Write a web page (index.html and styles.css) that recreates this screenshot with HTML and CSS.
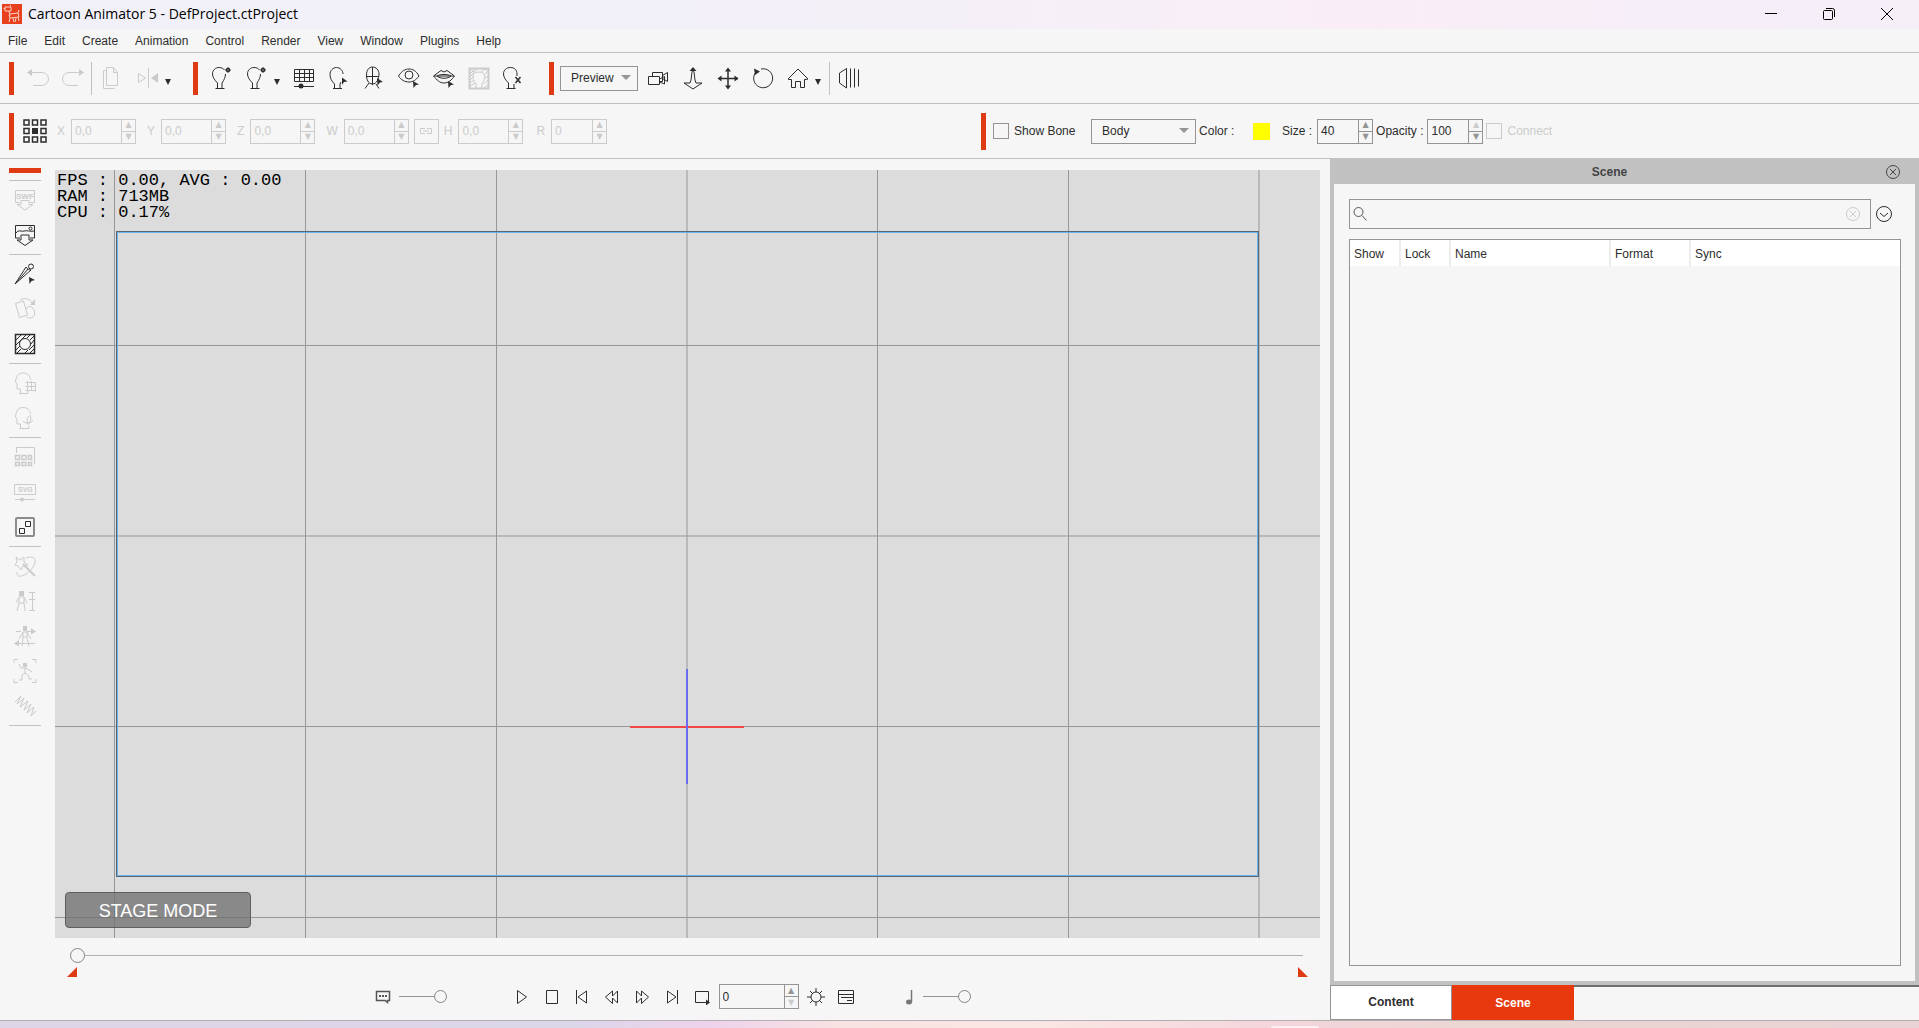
FILE: index.html
```html
<!DOCTYPE html>
<html lang="en">
<head>
<meta charset="utf-8">
<title>Cartoon Animator 5 - DefProject.ctProject</title>
<link rel="stylesheet" href="styles.css">
</head>
<body>
<svg class="sprite" aria-hidden="true">
  <symbol id="head-plus" viewBox="0 0 24 24"><path d="M7.500 22v-5C4.500 14 2.500 11 2.500 8c0-4 3-6.500 6.500-6.500 2.500 0 4.500 1 5.500 2.500M15.500 8c0 3-1.500 6-3.500 9v5M5.500 22.500h9"/><path d="M18 1v6M15 4h6M16.500 2.500h3v3h-3z"/></symbol>
  <symbol id="head-cursor" viewBox="0 0 24 24"><path d="M7.500 22v-4C4.500 15 3 12 3 8.500c0-4 3-7 6.500-7s6.500 3 6.500 6.500M14 16l-1 2v4M6 22.500h9"/><path class="solid" d="M15 11.500l5.500 4-3.500.5-2 3z"/></symbol>
  <symbol id="grid-slider" viewBox="0 0 24 24"><path d="M2.500 3.500h19v12h-19zM2.500 7.500h19M2.500 11.500h19M7.500 3.500v12M12.500 3.500v12M17.500 3.500v12M2 20.500h20"/><circle class="solid" cx="9" cy="20" r="2.500"/></symbol>
  <symbol id="head-mesh" viewBox="0 0 24 24"><path d="M4.500 9c0-5 2.500-8 6-8s6.500 3 6.500 7-2 10-6.500 10-6-5-6-9zM10.500 1v18M4 10.500h13M7 17l-4 5.500M14 18l3 4.500"/><path class="solid" d="M15 12l6 4-3 .5-2.500 3z"/></symbol>
  <symbol id="eye" viewBox="0 0 24 24"><path d="M1.500 10C5 4.500 8.500 3 12 3s7 1.500 10 7c-3 4-6 6-10 6S4 14 1.500 10z"/><circle cx="12" cy="9" r="4"/><path class="solid" d="M16 15l6 3.500-3 .5-2.500 3z"/></symbol>
  <symbol id="mouth" viewBox="0 0 24 24"><path d="M1.500 10L9 4.500l3 1.500 3-1.500L22.500 10c-3 4-6 7-10.500 7S5 14 1.500 10zM2 10h20M5 10c3-2 11-2 14 0-3 3-11 3-14 0z"/><path class="solid" d="M16 15l6 3.500-3 .5-2.500 3z"/></symbol>
  <symbol id="hatch-head" viewBox="0 0 24 24"><path d="M2.500 2.500h19v20h-19z" stroke-width="2"/><path d="M9 22v-4c-5-6-4-12 3-12s7 6 3 12v4M3 8l5-5M3 11l7-8M3 14l4-4M3 17l4-3M3 20l5-3M14 6l4-3M17 9l5-5M17 13l5-4M17 18l5-5M17 22l5-4M18 3l4 4M3 3l4 3"/></symbol>
  <symbol id="head-x" viewBox="0 0 24 24"><path d="M6.500 22v-5C3.500 14 1.500 11 1.500 8c0-4 3-6.500 7-6.500S15 4 15 8v2M12 18v4M4.500 22.500h9"/><path d="M13.500 11l5 6M18.500 11l-5 6" stroke-width="1.500"/></symbol>
  <symbol id="undo" viewBox="0 0 24 24"><path d="M3 6.500h13a5.500 5.500 0 0 1 0 13H7"/><path class="solid" d="M1 6.500L6 3v7z"/></symbol>
  <symbol id="redo" viewBox="0 0 24 24"><path d="M21 6.500H8a5.500 5.500 0 0 0 0 13h9"/><path class="solid" d="M23 6.500L18 3v7z"/></symbol>
  <symbol id="doc" viewBox="0 0 24 24"><path d="M4.500 4.500v18h11M4.500 4.500h3M7.500 1.500h7l4 5v13h-11zM14.500 1.500v5h4"/></symbol>
  <symbol id="flip" viewBox="0 0 24 24"><path d="M2.500 7.500v9l7-4.500zM12.500 2v20"/><path class="solid" d="M22 7v10l-7-5z"/></symbol>
  <symbol id="camera" viewBox="0 0 24 24"><path d="M2.500 10.500h11v8h-11zM6.500 10V6.500h10v9h-3M16.500 9.500l5-3v9l-5-3M13.500 13l5-2.500v7.500l-5-2"/></symbol>
  <symbol id="zoom-v" viewBox="0 0 24 24"><path d="M12 4l-1 2-1 8-1 3H3l9 6 9-6h-6l-1-3-1-8z"/><path class="solid" d="M12 1l3.500 4h-7z"/></symbol>
  <symbol id="move" viewBox="0 0 24 24"><path d="M12 3v19M3 12.500h19" stroke-width="1.500"/><path class="solid" d="M12 1.500l3 4H9zM12 23.500l3-4H9zM1.500 12.500l4-3v6zM22.500 12.500l-4-3v6z"/></symbol>
  <symbol id="rotate" viewBox="0 0 24 24"><path d="M5 6a9.500 9.500 0 1 0 5-3"/><path class="solid" d="M3 2.500l6 3-5 3.500z"/></symbol>
  <symbol id="home" viewBox="0 0 24 24"><path d="M2 13L12 3l10 10-2 .5h-1.500v8h-4v-6h-5v6h-4v-8H3z"/></symbol>
  <symbol id="depth" viewBox="0 0 24 24"><path d="M9.500 2.500L2.500 7v10l7 5zM13.500 2.500v19M17.500 2.500v19M21.500 3.500v17"/></symbol>
  <symbol id="caret" viewBox="0 0 6 6"><path class="solid" d="M0 0h6L3 6z"/></symbol>
  <symbol id="link" viewBox="0 0 16 12"><path d="M7 3.500H2.500v5H7M9 3.500h4.500v5H9M5 6h6"/></symbol>
  <symbol id="anchor9" viewBox="0 0 24 24"><path d="M1 1h5v5H1zM9.500 1h5v5h-5zM18 1h5v5h-5zM1 9.500h5v5H1zM18 9.500h5v5h-5zM1 18h5v5H1zM9.500 18h5v5h-5zM18 18h5v5h-5z" stroke-width="1.500"/><path class="solid" d="M9 9h6v6H9z"/></symbol>
  <symbol id="image-in" viewBox="0 0 24 24"><path d="M7 15H2.500V2.500h19V15H17M8 13v4H4l8 5.500 8-5.500h-4v-5H8zM3 10c3-4 5-1 8-2s6 1 10 0"/><circle cx="17.500" cy="5.500" r="1.500"/></symbol>
  <symbol id="bone" viewBox="0 0 24 24"><circle cx="18" cy="4.500" r="2.500"/><path d="M2 22L13 5c1 2 3 3 5 3zM3 21L15 7"/><path class="solid" d="M16 15l6 3-3.500 1-2 3z"/></symbol>
  <symbol id="turn-page" viewBox="0 0 24 24"><path d="M2.500 6.500l8-2.500 4 14-8 2.500zM7 3c5-3 10-1 12 3M13 12c2-4 8-3 8.500 3s-4 7-8 5"/><path class="solid" d="M22 2v6h-5z"/></symbol>
  <symbol id="mask" viewBox="0 0 24 24"><path d="M2.500 2.500h19v19h-19z" stroke-width="1.500"/><circle cx="12" cy="12" r="5.500"/><path d="M3 8l5-5M3 13L13 3M3 18l4-4M4 21l4-4M14 6l3-3M17 8l4-4M18 12l3-4M16 18l5-5M12 21l3-3M17 21l4-4"/></symbol>
  <symbol id="head-grid" viewBox="0 0 24 24"><path d="M7.500 22v-4H4v-5L2.500 11C3 5 5 2 10 2s7 3 7.500 7M6 22.500h9V20M12.500 11.500h10v9M12.500 15.500h10M12.500 19.500h10M14.500 10v10M18.500 10v10"/></symbol>
  <symbol id="head-spin" viewBox="0 0 24 24"><path d="M7.500 22v-4H4v-5L2.500 11C3 5 5 1.500 10 1.500s7 3 7.500 6.500M6 22.500h10V20M16 10c-3 3-2 8 0 9M20 14c-2 4-8 4-10 1M17 9c2 4 0 8-3 8"/></symbol>
  <symbol id="sprites" viewBox="0 0 24 24"><path d="M3.500 8V2.500h18V19"/><path d="M2.500 10.500h4v4h-4zM9 10.500h4v4H9zM15.500 10.500h3v4h-3zM2.500 17.500h4v3h-4zM9 17.500h4v3H9zM15.500 17.500h3v3h-3z" stroke-width="1.500"/></symbol>
  <symbol id="magic" viewBox="0 0 24 24"><path d="M3 3l4 3 4-3v5l4 3-5 1-2 4-3-4-3-1 2-3zM13 4c5-2 9-1 9 3s-3 9-9 13-10 2-9-2"/><path d="M10 10l12 12" stroke-width="2"/></symbol>
  <symbol id="man-height" viewBox="0 0 24 24"><path class="solid" d="M6 2h5v5H6z"/><path d="M3 14l3-6h5l3 6M6 9v5l-2 8M11 9v5l1 8M6 14h5M16 3.500h6M16 10.500h6M16 21.500h6M19.500 4v17"/></symbol>
  <symbol id="man-walk" viewBox="0 0 24 24"><path class="solid" d="M10 2h4v5h-4zM18 4l5 3.500-5 3zM6 16l-5 3.500 5 3z"/><path d="M3 7.500h5M14 7.500h5M6 15l4-7h4l4 7M10 8v6l-1 8M14 8v6l2 8M10 13h4M6 19.500h16"/></symbol>
  <symbol id="man-frame" viewBox="0 0 24 24"><path class="solid" d="M10 4h4v4h-4z"/><path d="M1 4V.500h4M19 .500h4V4M1 20v3.500h4M19 23.500h4V20M6 5l2 4h5l6 4M12 9v6M12 14l-3 2v5H6M12 14l4 3v3h3"/></symbol>
  <symbol id="spring" viewBox="0 0 24 24"><path d="M2 8l6-6-4 8 7-6-4 9 8-6-4 9 7-6-4 9 7-6-3 9 5-5"/></symbol>
  <symbol id="comment" viewBox="0 0 16 16"><path d="M1.500 2.500h13v9h-2v2l-2.500-2H1.500z" stroke-width="1.500"/><path class="solid" d="M4 6h2v2H4zM7 6h2v2H7zM10 6h2v2h-2z"/></symbol>
  <symbol id="note" viewBox="0 0 16 16"><path d="M10.500 1v12" stroke-width="1.500"/><ellipse class="solid" cx="8" cy="13" rx="3" ry="2.500"/></symbol>
  <symbol id="play" viewBox="0 0 16 16"><path d="M3.500 1.500v13l9-6.500z"/></symbol>
  <symbol id="stop" viewBox="0 0 16 16"><path d="M2.500 1.500h11v13h-11z"/></symbol>
  <symbol id="prev" viewBox="0 0 16 16"><path d="M2.500 1v14M12.500 2v12L4 8z"/></symbol>
  <symbol id="rewind" viewBox="0 0 16 16"><path d="M8.500 2L1.500 8l7 6.500V9l5 5V2l-5 5z"/></symbol>
  <symbol id="forward" viewBox="0 0 16 16"><path d="M7.500 2l7 6-7 6.500V9l-5 5V2l5 5z"/></symbol>
  <symbol id="next" viewBox="0 0 16 16"><path d="M13.500 1v14M3.500 2v12L12 8z"/></symbol>
  <symbol id="loop" viewBox="0 0 16 16"><path d="M11 13.500H1.500v-11h13v11H11"/><path class="solid" d="M12 10.500l4 3-4 3z"/></symbol>
  <symbol id="gear" viewBox="0 0 18 18"><circle cx="9" cy="9" r="5"/><path d="M9 0v4M9 14v4M0 9h4M14 9h4M3 3l3 3M15 3l-3 3M3 15l3-3M15 15l-3-3"/></symbol>
  <symbol id="list" viewBox="0 0 18 18"><path d="M1.500 2.500h15v13h-15zM2 6.500h14M4 9.500h12M10 12.500h5"/></symbol>
  <symbol id="close-round" viewBox="0 0 16 16"><circle cx="8" cy="8" r="6.500"/><path d="M5 5l6 6M11 5l-6 6"/></symbol>
  <symbol id="down-round" viewBox="0 0 18 18"><circle cx="9" cy="9" r="7.500"/><path d="M5 8l4 3.500L13 8"/></symbol>
  <symbol id="search" viewBox="0 0 16 16"><circle cx="5.500" cy="6" r="4.500"/><path d="M9 9.500l4.500 5"/></symbol>
</svg>

<header class="titlebar">
  <svg class="logo" viewBox="0 0 20 20" aria-hidden="true"><rect width="20" height="20"/><path d="M3 3h6v4H3zM1.500 4.500H3M8 2l1-1M7 7l1 5M8 10l8-1 1-3M16 9l1 4-9 1-1-3M8 14l-1 4M11 14l1 4M14 14l-1 4M16 13l1 4"/></svg>
  <h1>Cartoon Animator 5 - DefProject.ctProject</h1>
  <div class="window-buttons">
    <button aria-label="Minimize"><svg viewBox="0 0 14 14"><path d="M1 6.500h12"/></svg></button>
    <button aria-label="Restore"><svg viewBox="0 0 14 14"><rect x="1.500" y="3.500" width="9" height="9" rx="1"/><path d="M4 1.500h6.500a2 2 0 0 1 2 2V10"/></svg></button>
    <button aria-label="Close"><svg viewBox="0 0 14 14"><path d="M1 1l12 12M13 1L1 13"/></svg></button>
  </div>
</header>

<nav class="menubar">
  <button>File</button><button>Edit</button><button>Create</button><button>Animation</button><button>Control</button><button>Render</button><button>View</button><button>Window</button><button>Plugins</button><button>Help</button>
</nav>

<div class="toolbar main-tools" role="toolbar" aria-label="Main">
  <span class="grip"></span>
  <button class="tool" disabled aria-label="Undo"><svg><use href="#undo"/></svg></button>
  <button class="tool" disabled aria-label="Redo"><svg><use href="#redo"/></svg></button>
  <span class="divider"></span>
  <button class="tool" disabled aria-label="Copy"><svg><use href="#doc"/></svg></button>
  <button class="tool spaced" disabled aria-label="Flip"><svg><use href="#flip"/></svg></button>
  <button class="more" aria-label="Flip options"><svg><use href="#caret"/></svg></button>
  <span class="grip after-group"></span>
  <button class="tool" aria-label="Create head"><svg><use href="#head-plus"/></svg></button>
  <button class="tool" aria-label="Create actor"><svg><use href="#head-plus"/></svg></button>
  <button class="more" aria-label="Actor options"><svg><use href="#caret"/></svg></button>
  <button class="tool after-more" aria-label="Sprite editor"><svg><use href="#grid-slider"/></svg></button>
  <button class="tool" aria-label="Head"><svg><use href="#head-cursor"/></svg></button>
  <button class="tool" aria-label="Face fitting"><svg><use href="#head-mesh"/></svg></button>
  <button class="tool" aria-label="Eyes"><svg><use href="#eye"/></svg></button>
  <button class="tool" aria-label="Mouth"><svg><use href="#mouth"/></svg></button>
  <button class="tool" disabled aria-label="Background mask"><svg><use href="#hatch-head"/></svg></button>
  <button class="tool" aria-label="Remove head"><svg><use href="#head-x"/></svg></button>
  <span class="grip after-tools"></span>
  <div class="select preview"><select aria-label="Render quality"><option>Preview</option></select></div>
  <button class="tool spaced" aria-label="Camera"><svg><use href="#camera"/></svg></button>
  <button class="tool" aria-label="Zoom"><svg><use href="#zoom-v"/></svg></button>
  <button class="tool" aria-label="Pan"><svg><use href="#move"/></svg></button>
  <button class="tool" aria-label="Rotate"><svg><use href="#rotate"/></svg></button>
  <button class="tool" aria-label="Home"><svg><use href="#home"/></svg></button>
  <button class="more" aria-label="Home options"><svg><use href="#caret"/></svg></button>
  <span class="divider wide"></span>
  <button class="tool" aria-label="3D view"><svg><use href="#depth"/></svg></button>
</div>

<div class="toolbar props">
  <div class="props-left">
    <span class="grip tall"></span>
    <button class="anchor" aria-label="Pivot"><svg><use href="#anchor9"/></svg></button>
    <div class="field off first"><label for="fx">X</label><div class="spin"><input id="fx" type="text" value="0,0" disabled><div class="steps"><button disabled aria-label="Up">▲</button><button disabled aria-label="Down">▼</button></div></div></div>
    <div class="field off"><label for="fy">Y</label><div class="spin"><input id="fy" type="text" value="0,0" disabled><div class="steps"><button disabled aria-label="Up">▲</button><button disabled aria-label="Down">▼</button></div></div></div>
    <div class="field off"><label for="fz">Z</label><div class="spin"><input id="fz" type="text" value="0,0" disabled><div class="steps"><button disabled aria-label="Up">▲</button><button disabled aria-label="Down">▼</button></div></div></div>
    <div class="field off"><label for="fw">W</label><div class="spin"><input id="fw" type="text" value="0,0" disabled><div class="steps"><button disabled aria-label="Up">▲</button><button disabled aria-label="Down">▼</button></div></div></div>
    <button class="link" disabled aria-label="Lock ratio"><svg><use href="#link"/></svg></button>
    <div class="field off height"><label for="fh">H</label><div class="spin"><input id="fh" type="text" value="0,0" disabled><div class="steps"><button disabled aria-label="Up">▲</button><button disabled aria-label="Down">▼</button></div></div></div>
    <div class="field off angle"><label for="fr">R</label><div class="spin narrow"><input id="fr" type="text" value="0" disabled><div class="steps"><button disabled aria-label="Up">▲</button><button disabled aria-label="Down">▼</button></div></div></div>
  </div>
  <div class="props-right">
    <span class="grip tall"></span>
    <label class="check show-bone"><input type="checkbox">Show Bone</label>
    <div class="select body"><select aria-label="Bone part"><option>Body</option></select></div>
    <label class="color-label" for="bone-color">Color :</label>
    <button class="swatch" id="bone-color" aria-label="Bone color"></button>
    <div class="field"><label for="size">Size :</label><div class="spin narrow"><input id="size" type="text" value="40"><div class="steps"><button aria-label="Up">▲</button><button aria-label="Down">▼</button></div></div></div>
    <div class="field tight"><label for="opacity">Opacity :</label><div class="spin narrow"><input id="opacity" type="text" value="100"><div class="steps"><button disabled aria-label="Up">▲</button><button aria-label="Down">▼</button></div></div></div>
    <label class="check off"><input type="checkbox" disabled>Connect</label>
  </div>
</div>

<main class="workspace">
  <aside class="side-tools" role="toolbar" aria-label="Edit">
    <span class="side-grip"></span>
    <div class="group">
      <button disabled aria-label="Import SWF"><svg viewBox="0 0 24 24"><path d="M7 14.500H2.500v-12h19v12H17M8 12.500v4H4l8 5.500 8-5.500h-4v-4z"/><text class="icon-word" x="3" y="11">SWF</text></svg></button>
      <button aria-label="Import image"><svg><use href="#image-in"/></svg></button>
    </div>
    <div class="group">
      <button aria-label="Bone editor"><svg><use href="#bone"/></svg></button>
      <button disabled aria-label="Angle"><svg><use href="#turn-page"/></svg></button>
      <button aria-label="Mask"><svg><use href="#mask"/></svg></button>
    </div>
    <div class="group">
      <button disabled aria-label="Head setup"><svg><use href="#head-grid"/></svg></button>
      <button disabled aria-label="Head turn"><svg><use href="#head-spin"/></svg></button>
    </div>
    <div class="group">
      <button disabled aria-label="Sprites"><svg><use href="#sprites"/></svg></button>
      <button disabled aria-label="SVG"><svg viewBox="0 0 24 24"><path d="M1.500 4.500h21v10h-21zM2 19.500h20"/><circle class="solid" cx="9" cy="19.500" r="2"/><text class="icon-word small" x="5" y="12">SVG</text></svg></button>
      <button aria-label="Layers"><svg viewBox="0 0 24 24"><rect class="soft" x="3" y="3" width="18" height="18" rx="1"/><path d="M12.500 6.500h5v5h-5zM6.500 13.500h5v5h-5z"/></svg></button>
    </div>
    <div class="group last">
      <button disabled aria-label="Effects"><svg><use href="#magic"/></svg></button>
      <button disabled aria-label="Proportion"><svg><use href="#man-height"/></svg></button>
      <button disabled aria-label="Motion"><svg><use href="#man-walk"/></svg></button>
      <button disabled aria-label="Pose"><svg><use href="#man-frame"/></svg></button>
      <button disabled aria-label="Spring"><svg><use href="#spring"/></svg></button>
    </div>
  </aside>

  <section class="center">
    <div class="canvas">
      <svg class="scene" viewBox="0 0 1265 768" preserveAspectRatio="xMidYMid slice" aria-hidden="true">
        <path class="gridline" d="M59.500 0v768M250.500 0v768M441.500 0v768M632 0v768M822.500 0v768M1013.500 0v768M1204 0v768M0 175.500h1265M0 366h1265M0 556.500h1265M0 747.500h1265"/>
        <rect class="frame-outer" x="61.500" y="61.500" width="1142" height="645"/>
        <rect class="frame-inner" x="62.500" y="62.500" width="1140" height="643"/>
        <path class="axis-x" d="M575 557h114"/>
        <path class="axis-y" d="M632 499v115"/>
      </svg>
      <pre class="stats">FPS : 0.00, AVG : 0.00
RAM : 713MB
CPU : 0.17%</pre>
      <div class="mode">STAGE MODE</div>
    </div>
    <div class="timeline">
      <input class="seek" type="range" min="0" max="100" value="0" aria-label="Timeline">
      <div class="markers"><span class="mark start"></span><span class="mark end"></span></div>
      <div class="transport">
        <svg class="small-icon"><use href="#comment"/></svg>
        <input class="mini-range" type="range" value="100" aria-label="Voice volume">
        <div class="play-group">
          <button aria-label="Play"><svg><use href="#play"/></svg></button>
          <button aria-label="Stop"><svg><use href="#stop"/></svg></button>
          <button aria-label="First frame"><svg><use href="#prev"/></svg></button>
          <button aria-label="Previous frame"><svg><use href="#rewind"/></svg></button>
          <button aria-label="Next frame"><svg><use href="#forward"/></svg></button>
          <button aria-label="Last frame"><svg><use href="#next"/></svg></button>
          <button aria-label="Loop"><svg><use href="#loop"/></svg></button>
        </div>
        <div class="spin frame-no"><input type="text" value="0" aria-label="Current frame"><div class="steps"><button aria-label="Up">▲</button><button disabled aria-label="Down">▼</button></div></div>
        <div class="play-options">
          <button aria-label="Settings"><svg><use href="#gear"/></svg></button>
          <button aria-label="Timeline panel"><svg><use href="#list"/></svg></button>
        </div>
        <svg class="small-icon note"><use href="#note"/></svg>
        <input class="mini-range music" type="range" value="100" aria-label="Music volume">
      </div>
    </div>
  </section>

  <section class="dock">
    <div class="panel">
      <div class="panel-head"><h2>Scene</h2><button aria-label="Close panel"><svg><use href="#close-round"/></svg></button></div>
      <div class="panel-body">
        <div class="search-row">
          <div class="search"><svg class="small-icon"><use href="#search"/></svg><input type="text" aria-label="Search"><button disabled aria-label="Clear"><svg><use href="#close-round"/></svg></button></div>
          <button class="expand" aria-label="Search options"><svg><use href="#down-round"/></svg></button>
        </div>
        <div class="table-box">
          <table>
            <colgroup><col class="c-show"><col class="c-lock"><col class="c-name"><col class="c-format"><col></colgroup>
            <thead><tr><th>Show</th><th>Lock</th><th>Name</th><th>Format</th><th>Sync</th></tr></thead>
          </table>
        </div>
      </div>
    </div>
    <div class="tabs" role="tablist"><button role="tab" class="tab">Content</button><button role="tab" class="tab active" aria-selected="true">Scene</button></div>
  </section>
</main>

<footer class="desktop-edge"><span></span></footer>
</body>
</html>
```
FILE: styles.css
```css
* { box-sizing: border-box; }

body {
  margin: 0;
  min-height: 100vh;
  display: flex;
  flex-direction: column;
  background: #f6f6f6;
  color: #2d2d2d;
  font: 12px/16px "Liberation Sans", Arial, sans-serif;
}

button, input, select { font: inherit; color: inherit; margin: 0; }
button { background: none; border: 0; padding: 0; display: flex; align-items: center; justify-content: center; }
button:disabled { color: #cbcbcb; }
svg { display: block; flex: none; fill: none; stroke: currentColor; stroke-width: 1; }
.solid { fill: currentColor; stroke: none; }
.soft { stroke: #8c8c8c; stroke-width: 2; }
.icon-word { fill: currentColor; stroke: none; font: bold 8px "Liberation Sans", Arial, sans-serif; }
.icon-word.small { font-size: 7px; }
.sprite { position: absolute; width: 0; height: 0; }

/* Title bar */
.titlebar {
  display: flex;
  align-items: center;
  height: 29px;
  padding: 0 3px 1px 2px;
  background: linear-gradient(90deg, #f1f0f8, #f3f0f8 45%, #faeef6 72%, #f6eef8 85%, #f5eff8);
}
.logo { width: 20px; height: 20px; stroke: #fbd5c8; }
.logo rect { fill: #e8401c; stroke: none; }
.titlebar h1 { flex: 1; margin: 0 0 0 6px; font: 14px/20px "Open Sans", "Noto Sans", sans-serif; color: #000; }
.window-buttons { display: flex; color: #000; }
.window-buttons button { width: 58px; height: 28px; }
.window-buttons svg { width: 14px; height: 14px; }

/* Menu */
.menubar { display: flex; gap: 17px; height: 24px; padding-left: 8px; border-bottom: 1px solid #c1c1c1; }

/* Toolbars */
.toolbar { display: flex; align-items: center; border-bottom: 1px solid #c1c1c1; padding-left: 9px; }
.main-tools { height: 51px; }
.props { height: 55px; }
.grip { flex: none; width: 5px; height: 33px; margin-right: 6px; background: #de3a14; }
.grip.tall { height: 37px; }
.grip.after-group { margin-left: 22px; }
.grip.after-tools { margin-left: 18px; }
.tool { width: 35px; height: 33px; }
.tool svg, .anchor svg { width: 24px; height: 24px; }
.spaced { margin-left: 2px; }
.after-more { margin-left: 6px; }
.more { width: 6px; height: 33px; padding-top: 8px; }
.more svg { width: 6px; height: 6px; }
.divider { width: 1px; height: 33px; margin: 0 1px; background: #c1c1c1; }
.divider.wide { margin-left: 8px; }

.select { position: relative; height: 25px; border: 1px solid #949494; }
.select select { width: 100%; height: 23px; padding: 0 10px; border: 0; background: none; appearance: none; }
.select::after {
  content: "";
  position: absolute;
  right: 6px;
  top: 8px;
  border: 5px solid transparent;
  border-top-color: #949494;
  border-bottom: 0;
  pointer-events: none;
}
.preview { width: 78px; }
.body { width: 105px; }

.props-left, .props-right { display: flex; align-items: center; }
.props-left { flex: 0 0 calc(51% - 2px); }
.anchor { margin-left: 3px; }
.field { display: flex; align-items: center; gap: 5px; margin-left: 12px; white-space: nowrap; }
.field.off { gap: 6px; margin-left: 11px; }
.field.first { margin-left: 10px; }
.field.height { margin-left: 5px; }
.field.angle { margin-left: 13px; }
.field.tight { margin-left: 3px; gap: 4px; }
.off, .off label { color: #cbcbcb; }
.spin { display: flex; width: 65px; height: 25px; border: 1px solid #949494; }
.spin.narrow { width: 56px; }
.spin input { flex: 1; min-width: 0; width: 0; padding: 0 3px; border: 0; background: none; }
.off .spin, .off .steps, .off .steps button + button { border-color: #cbcbcb; }
.steps { display: flex; flex-direction: column; width: 14px; border-left: 1px solid #949494; color: #949494; }
.steps button { flex: 1; font: 8px/8px "DejaVu Sans", sans-serif; }
.steps button + button { border-top: 1px solid #949494; }
.link { width: 25px; height: 25px; margin-left: 5px; border: 1px solid #cbcbcb; }
.link svg { width: 16px; height: 12px; }

.check { display: flex; align-items: center; gap: 5px; margin-left: 3px; white-space: nowrap; }
.check input { width: 16px; height: 16px; appearance: none; border: 1px solid #949494; }
.check.off input { border-color: #cbcbcb; }
.show-bone { width: 98px; margin-left: 1px; }
.color-label { width: 54px; margin-left: 3px; }
.swatch { width: 17px; height: 17px; background: #ff0; }

/* Workspace */
.workspace { flex: 1; display: grid; grid-template-columns: 55px 1fr 589px; }

.side-tools { display: flex; flex-direction: column; width: 41px; padding: 9px 0 0 9px; }
.side-grip { height: 5px; margin-bottom: 7px; background: #de3a14; }
.group { display: flex; flex-direction: column; align-items: center; gap: 11px; padding: 7px 0; border-top: 1px solid #c1c1c1; }
.group.last { border-bottom: 1px solid #c1c1c1; }
.group svg { width: 24px; height: 24px; }

.center { display: flex; flex-direction: column; padding: 11px 10px 0 0; min-width: 0; }
.canvas { position: relative; flex: 1; min-height: 300px; background: #dcdcdc; overflow: hidden; }
.scene { position: absolute; inset: 0; width: 100%; height: 100%; }
.gridline { stroke: #979797; }
.frame-outer { stroke: #5c6670; }
.frame-inner { stroke: #69b4ea; }
.axis-x { stroke: #f04848; stroke-width: 2; }
.axis-y { stroke: #6c6cf0; stroke-width: 2; }
.stats { position: absolute; left: 2px; top: 3px; margin: 0; color: #000; font: 17px/16px "Liberation Mono", "Courier New", monospace; }
.mode {
  position: absolute;
  left: 10px;
  bottom: 10px;
  width: 186px;
  height: 36px;
  border: 1px solid #5f5f5f;
  border-radius: 4px;
  background: rgba(110, 110, 110, .75);
  color: #fff;
  font-size: 18px;
  line-height: 36px;
  text-align: center;
}

.timeline { height: 82px; }
input[type="range"] { appearance: none; display: block; background: none; }
.seek { width: calc(100% - 32px); height: 15px; margin: 10px 0 0 15px; }
.seek::-webkit-slider-runnable-track { height: 15px; background: linear-gradient(#b0b0b0, #b0b0b0) 0 7px / 100% 1px no-repeat; }
.seek::-webkit-slider-thumb { appearance: none; width: 15px; height: 15px; border: 1px solid #858585; border-radius: 50%; background: #f6f6f6; }
.markers { display: flex; justify-content: space-between; padding: 4px 12px 0; }
.mark { width: 10px; height: 10px; background: #de3a14; }
.mark.start { clip-path: polygon(100% 0, 100% 100%, 0 100%); }
.mark.end { clip-path: polygon(0 0, 100% 100%, 0 100%); }
.transport { display: flex; align-items: center; justify-content: center; padding: 7px 30px 0 0; }
.small-icon { width: 16px; height: 16px; color: #555; }
.mini-range { width: 48px; height: 13px; margin-left: 8px; }
.mini-range::-webkit-slider-runnable-track { height: 13px; background: linear-gradient(#949494, #949494) 0 6px / 100% 1px no-repeat; }
.mini-range::-webkit-slider-thumb { appearance: none; width: 13px; height: 13px; border: 1px solid #858585; border-radius: 50%; background: #f6f6f6; }
.play-group { display: flex; margin: 0 2px 0 60px; }
.play-group button, .play-options button { width: 30px; height: 25px; }
.play-group svg { width: 16px; height: 16px; }
.frame-no { width: 80px; }
.play-options { display: flex; margin: 0 40px 0 2px; }
.play-options svg { width: 18px; height: 18px; }
.note { color: #777; }
.mini-range.music { margin-left: 6px; }

/* Scene dock */
.dock { display: flex; flex-direction: column; }
.panel { flex: 1; display: flex; flex-direction: column; border: 4px solid #c1c1c1; border-top: 0; }
.panel-head { display: flex; align-items: center; height: 25px; background: #c1c1c1; color: #444; }
.panel-head h2 { flex: 1; margin: 0; font-size: 12px; line-height: 16px; text-align: center; }
.panel-head button { margin-right: 14px; }
.panel-head svg, .search button svg { width: 16px; height: 16px; }
.panel-body { flex: 1; display: flex; flex-direction: column; gap: 10px; padding: 15px 14px 15px 15px; }
.search-row { display: flex; align-items: center; gap: 4px; }
.search { flex: 1; display: flex; align-items: center; height: 30px; padding: 0 9px 0 3px; border: 1px solid #949494; }
.search input { flex: 1; min-width: 0; border: 0; background: none; }
.expand { width: 26px; justify-content: flex-start; }
.expand svg { width: 18px; height: 18px; }
.table-box { flex: 1; border: 1px solid #949494; }
table { width: 100%; border-collapse: collapse; table-layout: fixed; }
.c-show, .c-lock { width: 50px; }
.c-name { width: 160px; }
.c-format { width: 80px; }
th { height: 26px; padding: 2px 0 0 4px; background: #fff; font-weight: normal; text-align: left; }
th + th { border-left: 2px solid #ededed; }
.tabs { display: flex; height: 35px; box-shadow: inset 0 2px #707070; }
.tab { width: 122px; border: 1px solid #949494; background: #fff; font-weight: bold; padding-bottom: 2px; }
.tab.active { border: 0; background: #e8380d; color: #fff; padding: 0; }

.desktop-edge {
  height: 8px;
  padding-left: 66%;
  border-top: 1px solid #b4adb4;
  background: linear-gradient(90deg, #dcd6e6, #dcd6e9 30%, #eed3ec 37%, #f9e3e2 44%, #fae6e2 54%, #f4d6dc 66%, #ead6d2 77%, #ead3d5);
}
.desktop-edge span { display: block; width: 48px; height: 2px; margin: 5px 0 0 4px; border-radius: 2px 2px 0 0; background: #faf0f2; }
```
